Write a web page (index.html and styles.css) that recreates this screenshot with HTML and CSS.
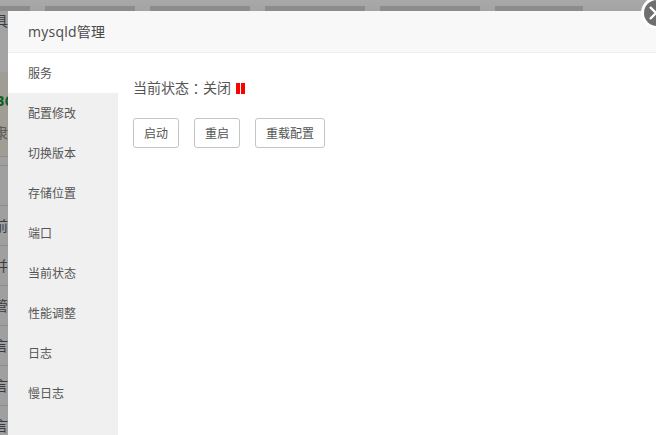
FILE: index.html
```html
<!DOCTYPE html>
<html lang="zh-CN">
<head>
    <meta charset="UTF-8">
    <meta name="viewport" content="width=device-width, initial-scale=1.0">
    <title>mysqld管理</title>
    <link rel="stylesheet" href="styles.css">
</head>
<body>
    <div class="page">
        <div class="tabs">
            <span class="tab tab-a"></span>
            <span class="tab tab-b"></span>
            <span class="tab tab-c"></span>
            <span class="tab tab-c"></span>
            <span class="tab tab-c"></span>
            <span class="tab tab-d"></span>
        </div>
        <div class="row row-head"><span>具</span></div>
        <div class="row row-soft row-tall"><span class="green">BC</span></div>
        <div class="row row-soft row-mid"><span class="faded">隶</span></div>
        <div class="row row-plain"></div>
        <div class="row"></div>
        <div class="row"><span>前</span></div>
        <div class="row"><span>并</span></div>
        <div class="row"><span>管</span></div>
        <div class="row"><span>言</span></div>
        <div class="row"><span>言</span></div>
        <div class="row"><span>言</span></div>
    </div>

    <div class="layer">
        <div class="layer-title">mysqld管理</div>
        <div class="layer-body">
            <ul class="menu">
                <li class="active">服务</li>
                <li>配置修改</li>
                <li>切换版本</li>
                <li>存储位置</li>
                <li>端口</li>
                <li>当前状态</li>
                <li>性能调整</li>
                <li>日志</li>
                <li>慢日志</li>
            </ul>
            <div class="content">
                <p class="status">当前状态<span class="colon">：</span>关闭<span class="pause"></span></p>
                <div class="actions">
                    <button>启动</button>
                    <button>重启</button>
                    <button>重载配置</button>
                </div>
            </div>
        </div>
    </div>

    <svg class="close" width="34" height="34" viewBox="0 0 34 34">
        <circle cx="17" cy="15" r="16" fill="#fff"/>
        <circle cx="17" cy="15" r="13" fill="#6f6f6f"/>
        <path d="M10 9 L16 15 L10 21 M24 9 L18 15 L24 21" fill="none" stroke="#fff" stroke-width="2.4"/>
    </svg>
</body>
</html>
```

FILE: styles.css
```css
* {
    margin: 0;
    padding: 0;
    box-sizing: border-box;
    font-family: 'Open Sans', 'Noto Sans CJK SC', sans-serif;
}

html, body {
    height: 100%;
    overflow: hidden;
}

body {
    background-color: #a3a3a3;
}

.page {
    display: flex;
    flex-direction: column;
    height: 100%;
    overflow: hidden;
}

.tabs {
    display: flex;
    flex: none;
    height: 11px;
    padding-top: 6px;
    gap: 15px;
    background-image: linear-gradient(to bottom, #a9a9a9, #a3a3a3);
}

.tab {
    height: 5px;
    background-color: #8c8c8c;
}

.tab-a { width: 30px; }
.tab-b { width: 90px; }
.tab-c { width: 100px; }
.tab-d { width: 88px; }

.row {
    flex: none;
    height: 40px;
    width: 8px;
    overflow: hidden;
    border-bottom: 1px solid #8e8e8e;
    background-color: #9f9f9f;
    color: #3a3c40;
    font-size: 14px;
    line-height: 40px;
    white-space: nowrap;
}

.row span {
    display: block;
    margin-left: -6px;
}

.row-head {
    height: 61px;
    line-height: 20px;
    background-color: #a3a3a3;
    border-bottom: 0;
}

.row-soft {
    background-color: #a09d94;
    border-bottom: 0;
}

.row-tall {
    height: 50px;
    line-height: 58px;
}

.row-mid {
    height: 35px;
    line-height: 22px;
    border-bottom: 1px solid #8e8e8e;
}

.row-plain {
    height: 9px;
}

.row .green {
    margin-left: -5px;
    color: #0b5f28;
    font-weight: bold;
}

.faded {
    color: #5c5c5c;
}

.layer {
    position: absolute;
    left: 8px;
    top: 11px;
    width: 660px;
    height: 440px;
    background-color: #fff;
}

.layer-title {
    height: 42px;
    padding-left: 20px;
    line-height: 41px;
    font-size: 14px;
    letter-spacing: 0.25px;
    color: #4a4a4a;
    background-color: #f8f8f8;
    border-bottom: 1px solid #eee;
}

.layer-body {
    display: flex;
    height: 398px;
}

.menu {
    width: 110px;
    flex: none;
    list-style: none;
    background-color: #f0f0f0;
}

.menu li {
    height: 40px;
    line-height: 42px;
    padding-left: 20px;
    font-size: 12px;
    color: #555;
}

.menu li.active {
    background-color: #fff;
}

.content {
    padding: 25px 15px;
}

.status {
    display: flex;
    align-items: center;
    font-size: 14px;
    line-height: 20px;
    color: #555;
}

.colon {
    font-family: 'Noto Sans CJK TC', sans-serif;
}

.pause {
    width: 9px;
    height: 11px;
    margin-left: 5px;
    border-left: 4px solid #f00;
    border-right: 4px solid #f00;
}

.actions {
    display: flex;
    gap: 15px;
    margin-top: 20px;
}

.actions button {
    height: 30px;
    padding: 0 10px;
    font-size: 12px;
    color: #555;
    background-color: #fff;
    border: 1px solid #c4c4c4;
    border-radius: 3px;
}

.close {
    position: absolute;
    left: 640px;
    top: -2px;
}
```
